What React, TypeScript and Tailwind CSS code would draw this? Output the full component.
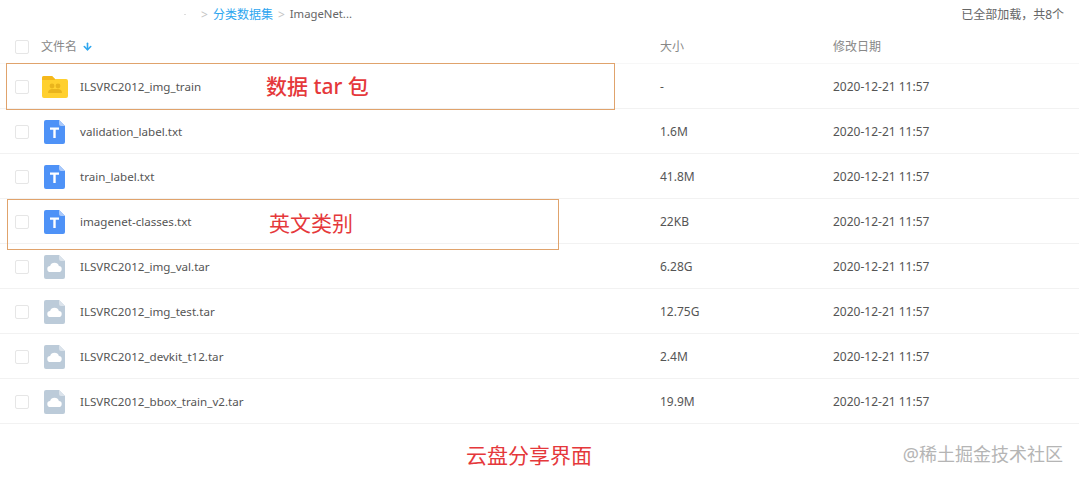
import { ArrowDown } from "lucide-react";

const FONT = "font-['Noto_Sans','Noto_Sans_CJK_SC',sans-serif]";

const FILES = [
  { name: "ILSVRC2012_img_train", size: "-", type: "folder" },
  { name: "validation_label.txt", size: "1.6M", type: "text" },
  { name: "train_label.txt", size: "41.8M", type: "text" },
  { name: "imagenet-classes.txt", size: "22KB", type: "text" },
  { name: "ILSVRC2012_img_val.tar", size: "6.28G", type: "archive" },
  { name: "ILSVRC2012_img_test.tar", size: "12.75G", type: "archive" },
  { name: "ILSVRC2012_devkit_t12.tar", size: "2.4M", type: "archive" },
  { name: "ILSVRC2012_bbox_train_v2.tar", size: "19.9M", type: "archive" },
];

function FileIcon({ type }: { type: string }) {
  if (type === "folder") {
    return (
      <svg width="26" height="22" viewBox="0 0 26 22">
        <path d="M2 0h8l3 3h11a2 2 0 0 1 2 2v15a2 2 0 0 1-2 2H2a2 2 0 0 1-2-2V2a2 2 0 0 1 2-2z" fill="#ffd02f" />
        <path d="M0 2a2 2 0 0 1 2-2h8l3 3v1H0z" fill="#f5b81c" />
        <circle cx="10" cy="10" r="2.4" fill="#e9b41d" />
        <circle cx="16" cy="10" r="2.4" fill="#e9b41d" />
        <path d="M6 17c0-3 2-4 4-4h6c2 0 4 1 4 4z" fill="#e9b41d" />
      </svg>
    );
  }
  if (type === "text") {
    return (
      <svg width="21" height="24" viewBox="0 0 21 24">
        <path d="M2 0h13l6 6v16a2 2 0 0 1-2 2H2a2 2 0 0 1-2-2V2a2 2 0 0 1 2-2z" fill="#4e92f7" />
        <path d="M15 0l6 6h-4a2 2 0 0 1-2-2z" fill="#a9c9fb" />
        <path d="M6 7.5h9v2.2h-3.3V18H9.3V9.7H6z" fill="#ffffff" />
      </svg>
    );
  }
  return (
    <svg width="21" height="24" viewBox="0 0 21 24">
      <path d="M2 0h13l6 6v16a2 2 0 0 1-2 2H2a2 2 0 0 1-2-2V2a2 2 0 0 1 2-2z" fill="#bccbd9" />
      <path d="M15 0l6 6h-4a2 2 0 0 1-2-2z" fill="#dbe3eb" />
      <path d="M6.5 17a3 3 0 0 1-.4-6 4.6 4.6 0 0 1 8.8 0 3 3 0 0 1-.4 6z" fill="#ffffff" />
    </svg>
  );
}

function Checkbox() {
  return <div className="h-[14px] w-[14px] rounded-[2px] border border-[#e6e6e6] bg-white" />;
}

export default function App() {
  return (
    <div className={`relative h-[481px] w-[1079px] overflow-hidden bg-white ${FONT}`}>
      <div className="flex h-[29px] items-center justify-between pl-[184px] pr-[15px] text-[12px]">
        <div className="flex items-center">
          <span className="mr-[15px] h-px w-[2px] bg-[#dddddd]" />
          <span className="mr-[5px] text-[#c4c4c4]">&gt;</span>
          <span className="mr-[5px] text-[#2ea6ef]">分类数据集</span>
          <span className="mr-[5px] text-[#c4c4c4]">&gt;</span>
          <span className="text-[11.3px] text-[#666666]">ImageNet...</span>
        </div>
        <span className="text-[#666666]">已全部加载，共8个</span>
      </div>

      <div className="flex h-[35px] items-center border-b border-[#f7f7f7] pt-px text-[12px] text-[#888888]">
        <div className="flex w-[41px] pl-[15px]"><Checkbox /></div>
        <div className="flex w-[619px] items-center gap-[5px]">
          文件名
          <ArrowDown className="h-[11px] w-[11px] text-[#2ea6ef]" strokeWidth={3.5} />
        </div>
        <div className="w-[173px]">大小</div>
        <div>修改日期</div>
      </div>

      {FILES.map((file) => (
        <div key={file.name} className="flex h-[45px] items-center border-b border-[#f2f2f2] pt-px text-[12px] text-[#555555]">
          <div className="flex w-[41px] pl-[15px]"><Checkbox /></div>
          <div className="flex w-[39px] justify-center pr-[12px]"><FileIcon type={file.type} /></div>
          <div className="w-[580px] text-[11.6px]">{file.name}</div>
          <div className="w-[173px]">{file.size}</div>
          <div>2020-12-21 11:57</div>
        </div>
      ))}

      <div className="absolute left-[6px] top-[63px] flex h-[47px] w-[609px] items-center border border-[#e0a36c] pl-[259px] text-[21px] font-medium text-[#e5383b]">
        数据 tar 包
      </div>
      <div className="absolute left-[7px] top-[199px] h-[51px] w-[552px] border border-[#e0a36c] pl-[261px] pt-[8px] text-[21px] leading-[30px] text-[#e5383b]">
        英文类别
      </div>
      <div className="absolute left-[466px] top-[440px] text-[21px] leading-[30px] text-[#e5383b]">云盘分享界面</div>
      <div className="absolute right-[16px] top-[442px] text-[18px] leading-[24px] text-[#b5b5b5]">@稀土掘金技术社区</div>
    </div>
  );
}
